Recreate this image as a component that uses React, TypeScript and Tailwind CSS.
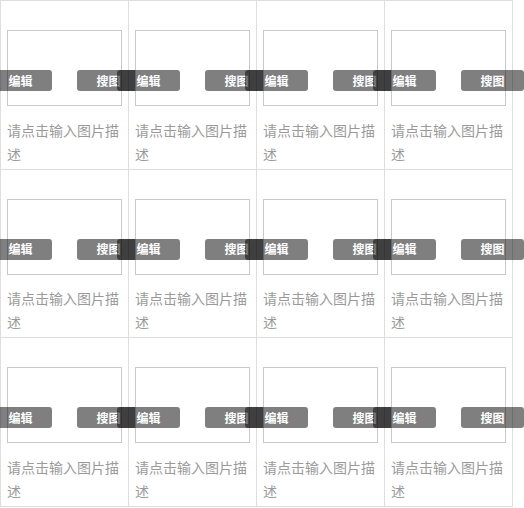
const CELLS = Array.from({ length: 12 }, (_, i) => i);

function PhotoCell() {
  return (
    <div className="h-[168.5px] border-l border-t border-[#dedede] px-[6px] pt-[29px]">
      {/* picture frame with the two action buttons hanging off its sides */}
      <div className="relative h-[76px] w-[115px] border border-[#c8c8c8] bg-white">
        <button className="absolute left-[-19px] top-[39px] flex h-[21px] w-[63px] items-center justify-center rounded-[3px] bg-black/50 text-[12px] font-bold leading-none text-white">
          编辑
        </button>
        <button className="absolute right-[-19px] top-[39px] flex h-[21px] w-[63px] items-center justify-center rounded-[3px] bg-black/50 text-[12px] font-bold leading-none text-white">
          搜图
        </button>
      </div>
      <p className="mt-[11.5px] w-[115px] text-[14px] leading-[24px] text-[#9a9a9a]">
        请点击输入图片描述
      </p>
    </div>
  );
}

export default function App() {
  return (
    <div className="w-[524px] overflow-hidden bg-white font-['Noto_Sans_CJK_SC','Noto_Sans',sans-serif]">
      <div className="grid w-[513px] grid-cols-[repeat(4,128px)] border-b border-r border-[#dedede]">
        {CELLS.map((i) => (
          <PhotoCell key={i} />
        ))}
      </div>
    </div>
  );
}
